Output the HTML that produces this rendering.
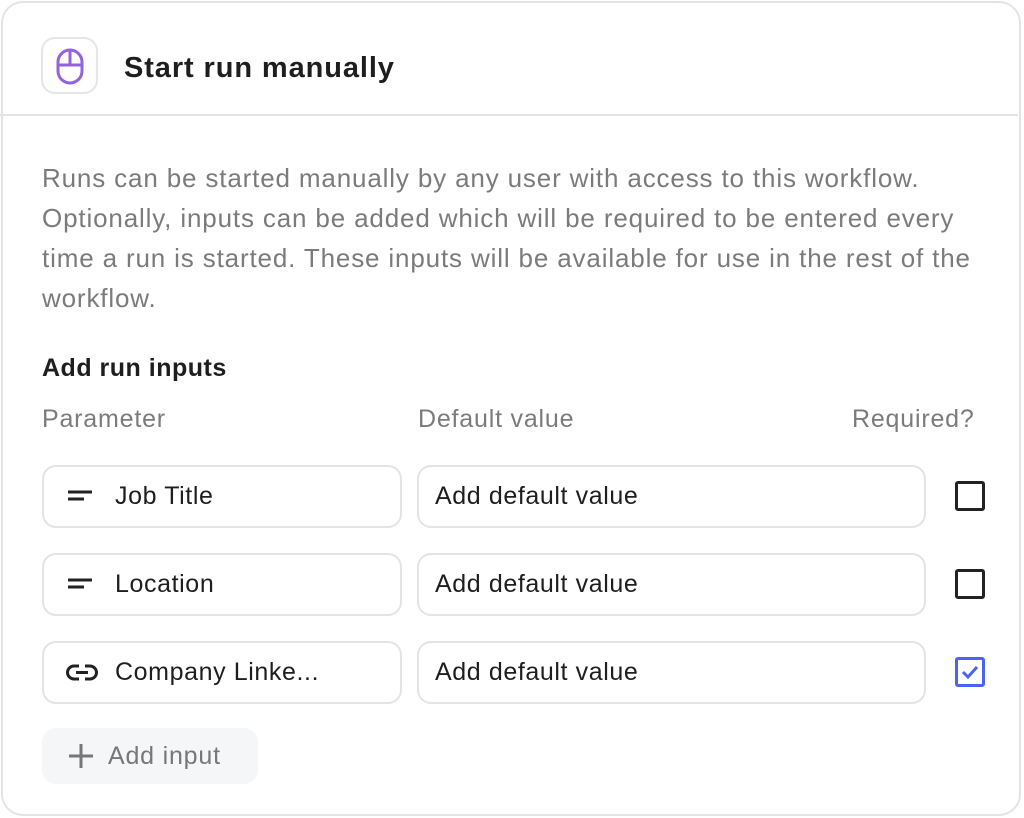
<!DOCTYPE html>
<html><head><style>
*{box-sizing:border-box;margin:0;padding:0}
body{width:1024px;height:818px;background:#fff;font-family:"Liberation Sans",sans-serif;position:relative;overflow:hidden}
.card{position:absolute;left:1px;top:1px;width:1020px;height:815px;border:2px solid #e4e4e8;border-radius:22px}
.hdr{position:absolute;left:0;top:0;width:1018px;height:116px;border-bottom:2px solid #e4e4e8}
.ic{position:absolute;left:41px;top:37px;width:57px;height:57px;border:2px solid #e6e6e6;border-radius:14px}
.t{position:absolute;left:124px;top:52px;font-size:29px;font-weight:bold;color:#1e1e1e;letter-spacing:0.9px}
.desc{position:absolute;left:42px;top:158px;width:980px;font-size:26px;line-height:40px;color:#7b7b7b;letter-spacing:0.85px;white-space:nowrap}
.sub{position:absolute;left:42px;top:354px;font-size:25px;font-weight:bold;color:#1e1e1e;letter-spacing:0.5px}
.col{position:absolute;top:405px;font-size:25px;color:#7b7b7b;letter-spacing:0.8px}
.in{position:absolute;height:63px;border:2px solid #e4e4e4;border-radius:14px;font-size:25px;color:#1e1e1e;line-height:59px;letter-spacing:0.6px}
.p{left:42px;width:360px;padding-left:71px}
.d{left:417px;width:509px;padding-left:16px}
.pi{position:absolute;left:22px;top:19px}
.cb{position:absolute;left:955px;width:30px;height:30px;border:3px solid #222;border-radius:3px}
.add{position:absolute;left:42px;top:728px;width:216px;height:56px;background:#f5f6f8;border-radius:14px;font-size:25px;color:#777;line-height:56px;padding-left:66px;letter-spacing:0.8px}
</style></head><body>
<div class="card"></div>
<div class="hdr"></div>
<div class="ic"><svg width="57" height="57" viewBox="0 0 57 57" style="position:absolute;left:-2px;top:-2px"><rect x="17" y="13" width="24" height="33" rx="12" fill="none" stroke="#9262e0" stroke-width="3"/><path d="M17 28h24M29 13v15" stroke="#9262e0" stroke-width="3" fill="none"/></svg></div>
<div class="t">Start run manually</div>
<div class="desc">Runs can be started manually by any user with access to this workflow.<br>Optionally, inputs can be added which will be required to be entered every<br>time a run is started. These inputs will be available for use in the rest of the<br>workflow.</div>
<div class="sub">Add run inputs</div>
<div class="col" style="left:42px">Parameter</div>
<div class="col" style="left:418px">Default value</div>
<div class="col" style="left:852px">Required?</div>

<div class="in p" style="top:465px"><svg class="pi" width="28" height="20"><path d="M2 6h24M2 13h16" stroke="#222" stroke-width="3"/></svg>Job Title</div>
<div class="in d" style="top:465px">Add default value</div>
<div class="cb" style="top:481px"></div>

<div class="in p" style="top:553px"><svg class="pi" width="28" height="20"><path d="M2 6h24M2 13h16" stroke="#222" stroke-width="3"/></svg>Location</div>
<div class="in d" style="top:553px">Add default value</div>
<div class="cb" style="top:569px"></div>

<div class="in p" style="top:641px"><svg class="pi" width="32" height="22"><path d="M13 4H8a6.5 6.5 0 0 0 0 13h5M19 4h5a6.5 6.5 0 0 1 0 13h-5M10 10.5h12" stroke="#222" stroke-width="3" fill="none"/></svg>Company Linke...</div>
<div class="in d" style="top:641px">Add default value</div>
<div class="cb" style="top:657px;border-color:#4a63f5"><svg width="24" height="24" style="position:absolute;left:0;top:0"><path d="M5 12l5 5 9-10" stroke="#4a63f5" stroke-width="3" fill="none"/></svg></div>

<div class="add"><svg width="26" height="26" style="position:absolute;left:26px;top:15px"><path d="M13 1v24M1 13h24" stroke="#777" stroke-width="3"/></svg>Add input</div>
</body></html>
